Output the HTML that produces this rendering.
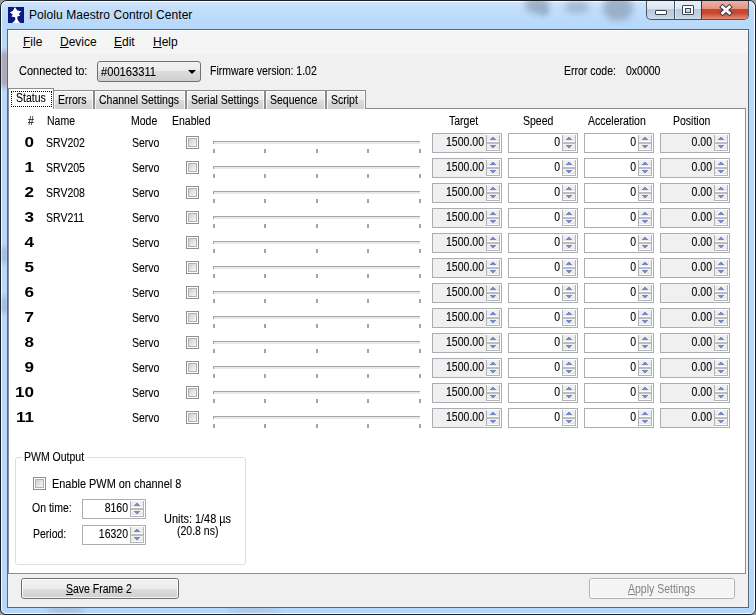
<!DOCTYPE html>
<html><head><meta charset="utf-8">
<style>
*{box-sizing:border-box;margin:0;padding:0}
html,body{width:756px;height:615px;overflow:hidden;background:#9a9a9a;font-family:"Liberation Sans",sans-serif;font-size:12px;color:#000}
#win{position:absolute;left:0;top:0;width:756px;height:615px;border:1px solid #1a2028;border-radius:7px 7px 6px 6px;
  background:linear-gradient(#d3e6fa,#c2defb 8px,#b9d9fb 22px,#b9d9fb 560px,#b6d7fb);overflow:hidden}
#win:before{content:"";position:absolute;left:0;top:0;right:0;bottom:0;border:1px solid rgba(255,255,255,.85);border-radius:6px 6px 5px 5px}
.blob{position:absolute;border-radius:50%;background:#8ea2ba;filter:blur(4px)}
#icon{position:absolute;left:7px;top:6px;width:16px;height:16px;background:#0b1a80}
#title{position:absolute;left:28px;top:7px;font-size:12px;color:#000;white-space:nowrap;letter-spacing:0.07px}
#client{position:absolute;left:7px;top:29px;width:742px;height:579px;border:1px solid #58687a;background:#f0f0f0;overflow:hidden}
#client:after{content:"";position:absolute;left:-2px;top:-2px;right:-2px;bottom:-2px;border:1px solid rgba(255,255,255,.8);pointer-events:none}
.t{position:absolute;white-space:nowrap;line-height:14px;font-size:12px;transform:scaleX(.875);transform-origin:0 0;-webkit-text-stroke:0.1px #000}
.t.r{text-align:right;transform-origin:100% 0}
.menu{position:absolute;font-size:12px;top:35px;line-height:14px;white-space:nowrap}
.u{text-decoration:underline;text-underline-offset:1px}
.combo{position:absolute;left:97px;top:61px;width:104px;height:21px;border:1px solid #707070;border-radius:3px;background:linear-gradient(#f2f2f2,#ebebeb 50%,#dddddd 50%,#cfcfcf)}
.tab{position:absolute;top:90px;height:19px;border:1px solid #898c95;border-bottom:none;background:linear-gradient(#f2f2f2,#ebebeb 50%,#dddddd 50%,#cfcfcf)}
.tab:before{content:"";position:absolute;left:0;top:0;right:0;bottom:0;border:1px solid rgba(255,255,255,.8);border-bottom:none}
#panel{position:absolute;left:8px;top:108px;width:738px;height:466px;border:1px solid #898c95;background:#fff}
.rn{position:absolute;width:34px;left:0;text-align:right;font-weight:bold;font-size:14px;line-height:16px;transform:scaleX(1.22);transform-origin:34px 0}
.cb{position:absolute;width:13px;height:13px;border:1px solid #8e8f8f;background:#fff}
.cb i{position:absolute;left:1px;top:1px;width:9px;height:9px;border:1px solid #aeb3b9;background:linear-gradient(135deg,#cbcfd5,#f7f7f7)}
.trk{position:absolute;width:207px;height:3px;border-top:1px solid #a6a6a6;border-left:1px solid #a6a6a6;background:#e7eaea}
.tick{position:absolute;width:2px;height:4px;background:#a4a4a4}
.nb{position:absolute;height:20px;border:1px solid #abadb3;background:#fff}
.nbg{position:absolute;left:0;top:0;height:18px}
.nb.ro .nbg{background:#f0f0f0}
.spin{position:absolute;width:14px;height:16px;background:#fff;border-left:1px solid #b4b4b4;border-right:1px solid #b4b4b4;border-bottom:1px solid #b4b4b4}
.spin:before{content:"";position:absolute;left:0;right:0;top:7px;height:2px;background:#bcbcbc}
.su,.sd{position:absolute;left:0;width:12px;background:linear-gradient(#f2f2f2,#e8e8e8)}
.su{top:0;height:6px} .sd{top:9px;height:5px}
.spin b{position:absolute;height:1px;background:#7589cb}
.a1{left:5px;top:2px;width:2px} .a2{left:4px;top:3px;width:4px} .a3{left:3px;top:4px;width:6px}
.d1{left:3px;top:1px;width:6px} .d2{left:4px;top:2px;width:4px} .d3{left:5px;top:3px;width:2px}
.btn{position:absolute;top:578px;height:21px;border:1px solid #707070;border-radius:3px;background:linear-gradient(#f2f2f2,#ebebeb 50%,#dddddd 50%,#cfcfcf)}
.btn:before{content:"";position:absolute;left:0;top:0;right:0;bottom:0;border:1px solid rgba(255,255,255,.8);border-radius:2px}
.btn.dis{border-color:#adb2b5;background:#f4f4f4}
.grp{position:absolute;left:15px;top:457px;width:231px;height:108px;border:1px solid #d5dfe5;border-radius:3px}
</style></head><body>
<div id="win">
  <div class="blob" style="left:524px;top:-5px;width:24px;height:18px;opacity:.75;filter:blur(3px)"></div><div class="blob" style="left:538px;top:6px;width:10px;height:9px;opacity:.6;filter:blur(2.5px)"></div>
  <div class="blob" style="left:564px;top:0px;width:24px;height:12px;opacity:.6;border-radius:40%;filter:blur(3px)"></div>
  <div class="blob" style="left:602px;top:-6px;width:30px;height:26px;opacity:.75;filter:blur(3px)"></div>
  <div class="blob" style="left:45px;top:606px;width:40px;height:6px;opacity:.45;filter:blur(2px)"></div>
  <div class="blob" style="left:225px;top:606px;width:55px;height:6px;opacity:.3;filter:blur(2px)"></div>
  <div class="blob" style="left:1px;top:50px;width:5px;height:36px;background:#a98b92;filter:blur(2.5px);border-radius:2px"></div>
  <div class="blob" style="left:1px;top:244px;width:5px;height:20px;opacity:.7;filter:blur(2px)"></div>
  <div class="blob" style="left:1px;top:294px;width:5px;height:20px;opacity:.7;filter:blur(2px)"></div>
  <div id="icon"><svg width="16" height="16" viewBox="0 0 16 16"><path d="M6.8 0 L9.4 3.4 L13.3 4.3 L10.8 6.9 L12.3 8.7 L9.3 9.6 L9.4 12 Q10 14.5 12.3 16 L4.2 16 Q6.8 14.5 7.4 12 L7.0 10.2 L3.4 9.5 L4.8 7.6 L1.9 5.6 L5.0 3.7 Z" fill="#fff"/></svg></div>
  <div id="title">Pololu Maestro Control Center</div>
  <div style="position:absolute;left:645px;top:-1px;width:103px;height:20px;border:1px solid #4a5564;border-top:none;border-radius:0 0 5px 5px;overflow:hidden;background:linear-gradient(#eaf1f9,#dde7f2 45%,#b9cadc 50%,#c3d3e4 85%,#d0deec)">
    <div style="position:absolute;left:27px;top:0;width:1px;height:20px;background:#4a5564"></div>
    <div style="position:absolute;left:28px;top:0;width:1px;height:20px;background:rgba(255,255,255,.5)"></div>
    <div style="position:absolute;left:54px;top:0;width:1px;height:20px;background:#5a2a22"></div>
    <div style="position:absolute;left:55px;top:0;width:47px;height:19px;background:linear-gradient(#efb6aa,#e39684 45%,#c9442a 50%,#c94a30 70%,#e58c74)"></div>
    <div style="position:absolute;left:8px;top:10px;width:12px;height:5px;background:#fff;border:1px solid #3c4452;border-radius:1px"></div>
    <div style="position:absolute;left:35px;top:5px;width:12px;height:10px;background:#fff;border:1px solid #3c4452;border-radius:1px"><div style="position:absolute;left:2px;top:2px;width:6px;height:5px;border:1px solid #3c4452;background:#c9dbee"></div></div>
    <svg style="position:absolute;left:72px;top:4px" width="14" height="12" viewBox="0 0 14 12"><path d="M3.6 3 L10.4 9 M10.4 3 L3.6 9" stroke="#3b3b4a" stroke-width="4.8" stroke-linecap="square"/><path d="M3.6 3 L10.4 9 M10.4 3 L3.6 9" stroke="#fff" stroke-width="2.8" stroke-linecap="square"/></svg>
  </div>
</div>
<div id="client"></div>
<div style="position:absolute;left:8px;top:30px;width:740px;height:24px;background:#f5f5f5;border-top:1px solid #fff"></div>
<div class="menu" style="left:23px"><span class="u">F</span>ile</div>
<div class="menu" style="left:60px"><span class="u">D</span>evice</div>
<div class="menu" style="left:114px"><span class="u">E</span>dit</div>
<div class="menu" style="left:153px"><span class="u">H</span>elp</div>
<div class="t" style="left:19px;top:64px;transform:scaleX(.915)">Connected to:</div>
<div class="combo"></div>
<div class="t" style="left:101px;top:65px;transform:scaleX(.93)">#00163311</div>
<div style="position:absolute;left:188px;top:70px;width:0;height:0;border-left:4px solid transparent;border-right:4px solid transparent;border-top:4px solid #000"></div>
<div class="t" style="left:210px;top:64px;">Firmware version: 1.02</div>
<div class="t" style="left:564px;top:64px;">Error code:</div>
<div class="t" style="left:626px;top:64px;">0x0000</div>
<div id="panel"></div>
<div class="tab" style="left:53px;width:41px"></div><div class="t" style="left:58px;top:93px;">Errors</div>
<div class="tab" style="left:94px;width:92px"></div><div class="t" style="left:99px;top:93px;">Channel Settings</div>
<div class="tab" style="left:186px;width:79px"></div><div class="t" style="left:191px;top:93px;">Serial Settings</div>
<div class="tab" style="left:265px;width:61px"></div><div class="t" style="left:270px;top:93px;">Sequence</div>
<div class="tab" style="left:326px;width:40px"></div><div class="t" style="left:331px;top:93px;">Script</div>
<div style="position:absolute;left:8px;top:88px;width:46px;height:21px;border:1px solid #898c95;border-bottom:none;background:#fff"></div>
<div style="position:absolute;left:11px;top:91px;width:41px;height:16px;border:1px dotted #000"></div>
<div class="t" style="left:16px;top:91px;">Status</div>
<div class="t" style="left:28px;top:114px;">#</div>
<div class="t" style="left:47px;top:114px;">Name</div>
<div class="t" style="left:131px;top:114px;">Mode</div>
<div class="t" style="left:172px;top:114px;">Enabled</div>
<div class="t" style="left:449px;top:114px;">Target</div>
<div class="t" style="left:523px;top:114px;">Speed</div>
<div class="t" style="left:588px;top:114px;">Acceleration</div>
<div class="t" style="left:673px;top:114px;">Position</div>
<div class="rn" style="top:134px">0</div>
<div class="t" style="left:46px;top:136px;">SRV202</div>
<div class="t" style="left:132px;top:136px;">Servo</div>
<div class="cb" style="left:186px;top:136px"><i></i></div>
<div class="trk" style="left:213px;top:141px"></div>
<div class="tick" style="left:213px;top:149px"></div>
<div class="tick" style="left:264px;top:149px"></div>
<div class="tick" style="left:316px;top:149px"></div>
<div class="tick" style="left:367px;top:149px"></div>
<div class="tick" style="left:419px;top:149px"></div>
<div class="nb ro" style="left:432px;top:133px;width:70px"><div class="nbg" style="width:53px"></div></div><div class="t r" style="left:284px;top:135px;width:200px">1500.00</div><div class="spin" style="left:486px;top:135px"><div class="su"><b class="a1"></b><b class="a2"></b><b class="a3"></b></div><div class="sd"><b class="d1"></b><b class="d2"></b><b class="d3"></b></div></div>
<div class="nb" style="left:508px;top:133px;width:70px"><div class="nbg" style="width:53px"></div></div><div class="t r" style="left:360px;top:135px;width:200px">0</div><div class="spin" style="left:562px;top:135px"><div class="su"><b class="a1"></b><b class="a2"></b><b class="a3"></b></div><div class="sd"><b class="d1"></b><b class="d2"></b><b class="d3"></b></div></div>
<div class="nb" style="left:584px;top:133px;width:70px"><div class="nbg" style="width:53px"></div></div><div class="t r" style="left:436px;top:135px;width:200px">0</div><div class="spin" style="left:638px;top:135px"><div class="su"><b class="a1"></b><b class="a2"></b><b class="a3"></b></div><div class="sd"><b class="d1"></b><b class="d2"></b><b class="d3"></b></div></div>
<div class="nb ro" style="left:660px;top:133px;width:70px"><div class="nbg" style="width:53px"></div></div><div class="t r" style="left:512px;top:135px;width:200px">0.00</div><div class="spin" style="left:714px;top:135px"><div class="su"><b class="a1"></b><b class="a2"></b><b class="a3"></b></div><div class="sd"><b class="d1"></b><b class="d2"></b><b class="d3"></b></div></div>
<div class="rn" style="top:159px">1</div>
<div class="t" style="left:46px;top:161px;">SRV205</div>
<div class="t" style="left:132px;top:161px;">Servo</div>
<div class="cb" style="left:186px;top:161px"><i></i></div>
<div class="trk" style="left:213px;top:166px"></div>
<div class="tick" style="left:213px;top:174px"></div>
<div class="tick" style="left:264px;top:174px"></div>
<div class="tick" style="left:316px;top:174px"></div>
<div class="tick" style="left:367px;top:174px"></div>
<div class="tick" style="left:419px;top:174px"></div>
<div class="nb ro" style="left:432px;top:158px;width:70px"><div class="nbg" style="width:53px"></div></div><div class="t r" style="left:284px;top:160px;width:200px">1500.00</div><div class="spin" style="left:486px;top:160px"><div class="su"><b class="a1"></b><b class="a2"></b><b class="a3"></b></div><div class="sd"><b class="d1"></b><b class="d2"></b><b class="d3"></b></div></div>
<div class="nb" style="left:508px;top:158px;width:70px"><div class="nbg" style="width:53px"></div></div><div class="t r" style="left:360px;top:160px;width:200px">0</div><div class="spin" style="left:562px;top:160px"><div class="su"><b class="a1"></b><b class="a2"></b><b class="a3"></b></div><div class="sd"><b class="d1"></b><b class="d2"></b><b class="d3"></b></div></div>
<div class="nb" style="left:584px;top:158px;width:70px"><div class="nbg" style="width:53px"></div></div><div class="t r" style="left:436px;top:160px;width:200px">0</div><div class="spin" style="left:638px;top:160px"><div class="su"><b class="a1"></b><b class="a2"></b><b class="a3"></b></div><div class="sd"><b class="d1"></b><b class="d2"></b><b class="d3"></b></div></div>
<div class="nb ro" style="left:660px;top:158px;width:70px"><div class="nbg" style="width:53px"></div></div><div class="t r" style="left:512px;top:160px;width:200px">0.00</div><div class="spin" style="left:714px;top:160px"><div class="su"><b class="a1"></b><b class="a2"></b><b class="a3"></b></div><div class="sd"><b class="d1"></b><b class="d2"></b><b class="d3"></b></div></div>
<div class="rn" style="top:184px">2</div>
<div class="t" style="left:46px;top:186px;">SRV208</div>
<div class="t" style="left:132px;top:186px;">Servo</div>
<div class="cb" style="left:186px;top:186px"><i></i></div>
<div class="trk" style="left:213px;top:191px"></div>
<div class="tick" style="left:213px;top:199px"></div>
<div class="tick" style="left:264px;top:199px"></div>
<div class="tick" style="left:316px;top:199px"></div>
<div class="tick" style="left:367px;top:199px"></div>
<div class="tick" style="left:419px;top:199px"></div>
<div class="nb ro" style="left:432px;top:183px;width:70px"><div class="nbg" style="width:53px"></div></div><div class="t r" style="left:284px;top:185px;width:200px">1500.00</div><div class="spin" style="left:486px;top:185px"><div class="su"><b class="a1"></b><b class="a2"></b><b class="a3"></b></div><div class="sd"><b class="d1"></b><b class="d2"></b><b class="d3"></b></div></div>
<div class="nb" style="left:508px;top:183px;width:70px"><div class="nbg" style="width:53px"></div></div><div class="t r" style="left:360px;top:185px;width:200px">0</div><div class="spin" style="left:562px;top:185px"><div class="su"><b class="a1"></b><b class="a2"></b><b class="a3"></b></div><div class="sd"><b class="d1"></b><b class="d2"></b><b class="d3"></b></div></div>
<div class="nb" style="left:584px;top:183px;width:70px"><div class="nbg" style="width:53px"></div></div><div class="t r" style="left:436px;top:185px;width:200px">0</div><div class="spin" style="left:638px;top:185px"><div class="su"><b class="a1"></b><b class="a2"></b><b class="a3"></b></div><div class="sd"><b class="d1"></b><b class="d2"></b><b class="d3"></b></div></div>
<div class="nb ro" style="left:660px;top:183px;width:70px"><div class="nbg" style="width:53px"></div></div><div class="t r" style="left:512px;top:185px;width:200px">0.00</div><div class="spin" style="left:714px;top:185px"><div class="su"><b class="a1"></b><b class="a2"></b><b class="a3"></b></div><div class="sd"><b class="d1"></b><b class="d2"></b><b class="d3"></b></div></div>
<div class="rn" style="top:209px">3</div>
<div class="t" style="left:46px;top:211px;">SRV211</div>
<div class="t" style="left:132px;top:211px;">Servo</div>
<div class="cb" style="left:186px;top:211px"><i></i></div>
<div class="trk" style="left:213px;top:216px"></div>
<div class="tick" style="left:213px;top:224px"></div>
<div class="tick" style="left:264px;top:224px"></div>
<div class="tick" style="left:316px;top:224px"></div>
<div class="tick" style="left:367px;top:224px"></div>
<div class="tick" style="left:419px;top:224px"></div>
<div class="nb ro" style="left:432px;top:208px;width:70px"><div class="nbg" style="width:53px"></div></div><div class="t r" style="left:284px;top:210px;width:200px">1500.00</div><div class="spin" style="left:486px;top:210px"><div class="su"><b class="a1"></b><b class="a2"></b><b class="a3"></b></div><div class="sd"><b class="d1"></b><b class="d2"></b><b class="d3"></b></div></div>
<div class="nb" style="left:508px;top:208px;width:70px"><div class="nbg" style="width:53px"></div></div><div class="t r" style="left:360px;top:210px;width:200px">0</div><div class="spin" style="left:562px;top:210px"><div class="su"><b class="a1"></b><b class="a2"></b><b class="a3"></b></div><div class="sd"><b class="d1"></b><b class="d2"></b><b class="d3"></b></div></div>
<div class="nb" style="left:584px;top:208px;width:70px"><div class="nbg" style="width:53px"></div></div><div class="t r" style="left:436px;top:210px;width:200px">0</div><div class="spin" style="left:638px;top:210px"><div class="su"><b class="a1"></b><b class="a2"></b><b class="a3"></b></div><div class="sd"><b class="d1"></b><b class="d2"></b><b class="d3"></b></div></div>
<div class="nb ro" style="left:660px;top:208px;width:70px"><div class="nbg" style="width:53px"></div></div><div class="t r" style="left:512px;top:210px;width:200px">0.00</div><div class="spin" style="left:714px;top:210px"><div class="su"><b class="a1"></b><b class="a2"></b><b class="a3"></b></div><div class="sd"><b class="d1"></b><b class="d2"></b><b class="d3"></b></div></div>
<div class="rn" style="top:234px">4</div>
<div class="t" style="left:132px;top:236px;">Servo</div>
<div class="cb" style="left:186px;top:236px"><i></i></div>
<div class="trk" style="left:213px;top:241px"></div>
<div class="tick" style="left:213px;top:249px"></div>
<div class="tick" style="left:264px;top:249px"></div>
<div class="tick" style="left:316px;top:249px"></div>
<div class="tick" style="left:367px;top:249px"></div>
<div class="tick" style="left:419px;top:249px"></div>
<div class="nb ro" style="left:432px;top:233px;width:70px"><div class="nbg" style="width:53px"></div></div><div class="t r" style="left:284px;top:235px;width:200px">1500.00</div><div class="spin" style="left:486px;top:235px"><div class="su"><b class="a1"></b><b class="a2"></b><b class="a3"></b></div><div class="sd"><b class="d1"></b><b class="d2"></b><b class="d3"></b></div></div>
<div class="nb" style="left:508px;top:233px;width:70px"><div class="nbg" style="width:53px"></div></div><div class="t r" style="left:360px;top:235px;width:200px">0</div><div class="spin" style="left:562px;top:235px"><div class="su"><b class="a1"></b><b class="a2"></b><b class="a3"></b></div><div class="sd"><b class="d1"></b><b class="d2"></b><b class="d3"></b></div></div>
<div class="nb" style="left:584px;top:233px;width:70px"><div class="nbg" style="width:53px"></div></div><div class="t r" style="left:436px;top:235px;width:200px">0</div><div class="spin" style="left:638px;top:235px"><div class="su"><b class="a1"></b><b class="a2"></b><b class="a3"></b></div><div class="sd"><b class="d1"></b><b class="d2"></b><b class="d3"></b></div></div>
<div class="nb ro" style="left:660px;top:233px;width:70px"><div class="nbg" style="width:53px"></div></div><div class="t r" style="left:512px;top:235px;width:200px">0.00</div><div class="spin" style="left:714px;top:235px"><div class="su"><b class="a1"></b><b class="a2"></b><b class="a3"></b></div><div class="sd"><b class="d1"></b><b class="d2"></b><b class="d3"></b></div></div>
<div class="rn" style="top:259px">5</div>
<div class="t" style="left:132px;top:261px;">Servo</div>
<div class="cb" style="left:186px;top:261px"><i></i></div>
<div class="trk" style="left:213px;top:266px"></div>
<div class="tick" style="left:213px;top:274px"></div>
<div class="tick" style="left:264px;top:274px"></div>
<div class="tick" style="left:316px;top:274px"></div>
<div class="tick" style="left:367px;top:274px"></div>
<div class="tick" style="left:419px;top:274px"></div>
<div class="nb ro" style="left:432px;top:258px;width:70px"><div class="nbg" style="width:53px"></div></div><div class="t r" style="left:284px;top:260px;width:200px">1500.00</div><div class="spin" style="left:486px;top:260px"><div class="su"><b class="a1"></b><b class="a2"></b><b class="a3"></b></div><div class="sd"><b class="d1"></b><b class="d2"></b><b class="d3"></b></div></div>
<div class="nb" style="left:508px;top:258px;width:70px"><div class="nbg" style="width:53px"></div></div><div class="t r" style="left:360px;top:260px;width:200px">0</div><div class="spin" style="left:562px;top:260px"><div class="su"><b class="a1"></b><b class="a2"></b><b class="a3"></b></div><div class="sd"><b class="d1"></b><b class="d2"></b><b class="d3"></b></div></div>
<div class="nb" style="left:584px;top:258px;width:70px"><div class="nbg" style="width:53px"></div></div><div class="t r" style="left:436px;top:260px;width:200px">0</div><div class="spin" style="left:638px;top:260px"><div class="su"><b class="a1"></b><b class="a2"></b><b class="a3"></b></div><div class="sd"><b class="d1"></b><b class="d2"></b><b class="d3"></b></div></div>
<div class="nb ro" style="left:660px;top:258px;width:70px"><div class="nbg" style="width:53px"></div></div><div class="t r" style="left:512px;top:260px;width:200px">0.00</div><div class="spin" style="left:714px;top:260px"><div class="su"><b class="a1"></b><b class="a2"></b><b class="a3"></b></div><div class="sd"><b class="d1"></b><b class="d2"></b><b class="d3"></b></div></div>
<div class="rn" style="top:284px">6</div>
<div class="t" style="left:132px;top:286px;">Servo</div>
<div class="cb" style="left:186px;top:286px"><i></i></div>
<div class="trk" style="left:213px;top:291px"></div>
<div class="tick" style="left:213px;top:299px"></div>
<div class="tick" style="left:264px;top:299px"></div>
<div class="tick" style="left:316px;top:299px"></div>
<div class="tick" style="left:367px;top:299px"></div>
<div class="tick" style="left:419px;top:299px"></div>
<div class="nb ro" style="left:432px;top:283px;width:70px"><div class="nbg" style="width:53px"></div></div><div class="t r" style="left:284px;top:285px;width:200px">1500.00</div><div class="spin" style="left:486px;top:285px"><div class="su"><b class="a1"></b><b class="a2"></b><b class="a3"></b></div><div class="sd"><b class="d1"></b><b class="d2"></b><b class="d3"></b></div></div>
<div class="nb" style="left:508px;top:283px;width:70px"><div class="nbg" style="width:53px"></div></div><div class="t r" style="left:360px;top:285px;width:200px">0</div><div class="spin" style="left:562px;top:285px"><div class="su"><b class="a1"></b><b class="a2"></b><b class="a3"></b></div><div class="sd"><b class="d1"></b><b class="d2"></b><b class="d3"></b></div></div>
<div class="nb" style="left:584px;top:283px;width:70px"><div class="nbg" style="width:53px"></div></div><div class="t r" style="left:436px;top:285px;width:200px">0</div><div class="spin" style="left:638px;top:285px"><div class="su"><b class="a1"></b><b class="a2"></b><b class="a3"></b></div><div class="sd"><b class="d1"></b><b class="d2"></b><b class="d3"></b></div></div>
<div class="nb ro" style="left:660px;top:283px;width:70px"><div class="nbg" style="width:53px"></div></div><div class="t r" style="left:512px;top:285px;width:200px">0.00</div><div class="spin" style="left:714px;top:285px"><div class="su"><b class="a1"></b><b class="a2"></b><b class="a3"></b></div><div class="sd"><b class="d1"></b><b class="d2"></b><b class="d3"></b></div></div>
<div class="rn" style="top:309px">7</div>
<div class="t" style="left:132px;top:311px;">Servo</div>
<div class="cb" style="left:186px;top:311px"><i></i></div>
<div class="trk" style="left:213px;top:316px"></div>
<div class="tick" style="left:213px;top:324px"></div>
<div class="tick" style="left:264px;top:324px"></div>
<div class="tick" style="left:316px;top:324px"></div>
<div class="tick" style="left:367px;top:324px"></div>
<div class="tick" style="left:419px;top:324px"></div>
<div class="nb ro" style="left:432px;top:308px;width:70px"><div class="nbg" style="width:53px"></div></div><div class="t r" style="left:284px;top:310px;width:200px">1500.00</div><div class="spin" style="left:486px;top:310px"><div class="su"><b class="a1"></b><b class="a2"></b><b class="a3"></b></div><div class="sd"><b class="d1"></b><b class="d2"></b><b class="d3"></b></div></div>
<div class="nb" style="left:508px;top:308px;width:70px"><div class="nbg" style="width:53px"></div></div><div class="t r" style="left:360px;top:310px;width:200px">0</div><div class="spin" style="left:562px;top:310px"><div class="su"><b class="a1"></b><b class="a2"></b><b class="a3"></b></div><div class="sd"><b class="d1"></b><b class="d2"></b><b class="d3"></b></div></div>
<div class="nb" style="left:584px;top:308px;width:70px"><div class="nbg" style="width:53px"></div></div><div class="t r" style="left:436px;top:310px;width:200px">0</div><div class="spin" style="left:638px;top:310px"><div class="su"><b class="a1"></b><b class="a2"></b><b class="a3"></b></div><div class="sd"><b class="d1"></b><b class="d2"></b><b class="d3"></b></div></div>
<div class="nb ro" style="left:660px;top:308px;width:70px"><div class="nbg" style="width:53px"></div></div><div class="t r" style="left:512px;top:310px;width:200px">0.00</div><div class="spin" style="left:714px;top:310px"><div class="su"><b class="a1"></b><b class="a2"></b><b class="a3"></b></div><div class="sd"><b class="d1"></b><b class="d2"></b><b class="d3"></b></div></div>
<div class="rn" style="top:334px">8</div>
<div class="t" style="left:132px;top:336px;">Servo</div>
<div class="cb" style="left:186px;top:336px"><i></i></div>
<div class="trk" style="left:213px;top:341px"></div>
<div class="tick" style="left:213px;top:349px"></div>
<div class="tick" style="left:264px;top:349px"></div>
<div class="tick" style="left:316px;top:349px"></div>
<div class="tick" style="left:367px;top:349px"></div>
<div class="tick" style="left:419px;top:349px"></div>
<div class="nb ro" style="left:432px;top:333px;width:70px"><div class="nbg" style="width:53px"></div></div><div class="t r" style="left:284px;top:335px;width:200px">1500.00</div><div class="spin" style="left:486px;top:335px"><div class="su"><b class="a1"></b><b class="a2"></b><b class="a3"></b></div><div class="sd"><b class="d1"></b><b class="d2"></b><b class="d3"></b></div></div>
<div class="nb" style="left:508px;top:333px;width:70px"><div class="nbg" style="width:53px"></div></div><div class="t r" style="left:360px;top:335px;width:200px">0</div><div class="spin" style="left:562px;top:335px"><div class="su"><b class="a1"></b><b class="a2"></b><b class="a3"></b></div><div class="sd"><b class="d1"></b><b class="d2"></b><b class="d3"></b></div></div>
<div class="nb" style="left:584px;top:333px;width:70px"><div class="nbg" style="width:53px"></div></div><div class="t r" style="left:436px;top:335px;width:200px">0</div><div class="spin" style="left:638px;top:335px"><div class="su"><b class="a1"></b><b class="a2"></b><b class="a3"></b></div><div class="sd"><b class="d1"></b><b class="d2"></b><b class="d3"></b></div></div>
<div class="nb ro" style="left:660px;top:333px;width:70px"><div class="nbg" style="width:53px"></div></div><div class="t r" style="left:512px;top:335px;width:200px">0.00</div><div class="spin" style="left:714px;top:335px"><div class="su"><b class="a1"></b><b class="a2"></b><b class="a3"></b></div><div class="sd"><b class="d1"></b><b class="d2"></b><b class="d3"></b></div></div>
<div class="rn" style="top:359px">9</div>
<div class="t" style="left:132px;top:361px;">Servo</div>
<div class="cb" style="left:186px;top:361px"><i></i></div>
<div class="trk" style="left:213px;top:366px"></div>
<div class="tick" style="left:213px;top:374px"></div>
<div class="tick" style="left:264px;top:374px"></div>
<div class="tick" style="left:316px;top:374px"></div>
<div class="tick" style="left:367px;top:374px"></div>
<div class="tick" style="left:419px;top:374px"></div>
<div class="nb ro" style="left:432px;top:358px;width:70px"><div class="nbg" style="width:53px"></div></div><div class="t r" style="left:284px;top:360px;width:200px">1500.00</div><div class="spin" style="left:486px;top:360px"><div class="su"><b class="a1"></b><b class="a2"></b><b class="a3"></b></div><div class="sd"><b class="d1"></b><b class="d2"></b><b class="d3"></b></div></div>
<div class="nb" style="left:508px;top:358px;width:70px"><div class="nbg" style="width:53px"></div></div><div class="t r" style="left:360px;top:360px;width:200px">0</div><div class="spin" style="left:562px;top:360px"><div class="su"><b class="a1"></b><b class="a2"></b><b class="a3"></b></div><div class="sd"><b class="d1"></b><b class="d2"></b><b class="d3"></b></div></div>
<div class="nb" style="left:584px;top:358px;width:70px"><div class="nbg" style="width:53px"></div></div><div class="t r" style="left:436px;top:360px;width:200px">0</div><div class="spin" style="left:638px;top:360px"><div class="su"><b class="a1"></b><b class="a2"></b><b class="a3"></b></div><div class="sd"><b class="d1"></b><b class="d2"></b><b class="d3"></b></div></div>
<div class="nb ro" style="left:660px;top:358px;width:70px"><div class="nbg" style="width:53px"></div></div><div class="t r" style="left:512px;top:360px;width:200px">0.00</div><div class="spin" style="left:714px;top:360px"><div class="su"><b class="a1"></b><b class="a2"></b><b class="a3"></b></div><div class="sd"><b class="d1"></b><b class="d2"></b><b class="d3"></b></div></div>
<div class="rn" style="top:384px">10</div>
<div class="t" style="left:132px;top:386px;">Servo</div>
<div class="cb" style="left:186px;top:386px"><i></i></div>
<div class="trk" style="left:213px;top:391px"></div>
<div class="tick" style="left:213px;top:399px"></div>
<div class="tick" style="left:264px;top:399px"></div>
<div class="tick" style="left:316px;top:399px"></div>
<div class="tick" style="left:367px;top:399px"></div>
<div class="tick" style="left:419px;top:399px"></div>
<div class="nb ro" style="left:432px;top:383px;width:70px"><div class="nbg" style="width:53px"></div></div><div class="t r" style="left:284px;top:385px;width:200px">1500.00</div><div class="spin" style="left:486px;top:385px"><div class="su"><b class="a1"></b><b class="a2"></b><b class="a3"></b></div><div class="sd"><b class="d1"></b><b class="d2"></b><b class="d3"></b></div></div>
<div class="nb" style="left:508px;top:383px;width:70px"><div class="nbg" style="width:53px"></div></div><div class="t r" style="left:360px;top:385px;width:200px">0</div><div class="spin" style="left:562px;top:385px"><div class="su"><b class="a1"></b><b class="a2"></b><b class="a3"></b></div><div class="sd"><b class="d1"></b><b class="d2"></b><b class="d3"></b></div></div>
<div class="nb" style="left:584px;top:383px;width:70px"><div class="nbg" style="width:53px"></div></div><div class="t r" style="left:436px;top:385px;width:200px">0</div><div class="spin" style="left:638px;top:385px"><div class="su"><b class="a1"></b><b class="a2"></b><b class="a3"></b></div><div class="sd"><b class="d1"></b><b class="d2"></b><b class="d3"></b></div></div>
<div class="nb ro" style="left:660px;top:383px;width:70px"><div class="nbg" style="width:53px"></div></div><div class="t r" style="left:512px;top:385px;width:200px">0.00</div><div class="spin" style="left:714px;top:385px"><div class="su"><b class="a1"></b><b class="a2"></b><b class="a3"></b></div><div class="sd"><b class="d1"></b><b class="d2"></b><b class="d3"></b></div></div>
<div class="rn" style="top:409px">11</div>
<div class="t" style="left:132px;top:411px;">Servo</div>
<div class="cb" style="left:186px;top:411px"><i></i></div>
<div class="trk" style="left:213px;top:416px"></div>
<div class="tick" style="left:213px;top:424px"></div>
<div class="tick" style="left:264px;top:424px"></div>
<div class="tick" style="left:316px;top:424px"></div>
<div class="tick" style="left:367px;top:424px"></div>
<div class="tick" style="left:419px;top:424px"></div>
<div class="nb ro" style="left:432px;top:408px;width:70px"><div class="nbg" style="width:53px"></div></div><div class="t r" style="left:284px;top:410px;width:200px">1500.00</div><div class="spin" style="left:486px;top:410px"><div class="su"><b class="a1"></b><b class="a2"></b><b class="a3"></b></div><div class="sd"><b class="d1"></b><b class="d2"></b><b class="d3"></b></div></div>
<div class="nb" style="left:508px;top:408px;width:70px"><div class="nbg" style="width:53px"></div></div><div class="t r" style="left:360px;top:410px;width:200px">0</div><div class="spin" style="left:562px;top:410px"><div class="su"><b class="a1"></b><b class="a2"></b><b class="a3"></b></div><div class="sd"><b class="d1"></b><b class="d2"></b><b class="d3"></b></div></div>
<div class="nb" style="left:584px;top:408px;width:70px"><div class="nbg" style="width:53px"></div></div><div class="t r" style="left:436px;top:410px;width:200px">0</div><div class="spin" style="left:638px;top:410px"><div class="su"><b class="a1"></b><b class="a2"></b><b class="a3"></b></div><div class="sd"><b class="d1"></b><b class="d2"></b><b class="d3"></b></div></div>
<div class="nb ro" style="left:660px;top:408px;width:70px"><div class="nbg" style="width:53px"></div></div><div class="t r" style="left:512px;top:410px;width:200px">0.00</div><div class="spin" style="left:714px;top:410px"><div class="su"><b class="a1"></b><b class="a2"></b><b class="a3"></b></div><div class="sd"><b class="d1"></b><b class="d2"></b><b class="d3"></b></div></div>
<div class="grp"></div>
<div style="position:absolute;left:22px;top:452px;width:65px;height:10px;background:#fff"></div>
<div class="t" style="left:24px;top:450px;">PWM Output</div>
<div class="cb" style="left:33px;top:477px"><i></i></div>
<div class="t" style="left:52px;top:477px;transform:scaleX(.91)">Enable PWM on channel 8</div>
<div class="t" style="left:32px;top:501px;">On time:</div>
<div class="t" style="left:33px;top:527px;">Period:</div>
<div class="nb" style="left:82px;top:499px;width:64px"><div class="nbg" style="width:47px"></div></div><div class="t r" style="left:-72px;top:501px;width:200px">8160</div><div class="spin" style="left:130px;top:501px"><div class="su"><b class="a1"></b><b class="a2"></b><b class="a3"></b></div><div class="sd"><b class="d1"></b><b class="d2"></b><b class="d3"></b></div></div>
<div class="nb" style="left:82px;top:525px;width:64px"><div class="nbg" style="width:47px"></div></div><div class="t r" style="left:-72px;top:527px;width:200px">16320</div><div class="spin" style="left:130px;top:527px"><div class="su"><b class="a1"></b><b class="a2"></b><b class="a3"></b></div><div class="sd"><b class="d1"></b><b class="d2"></b><b class="d3"></b></div></div>
<div class="t" style="left:164px;top:512px;transform:scaleX(.91)">Units: 1/48 µs</div>
<div class="t" style="left:177px;top:524px;">(20.8 ns)</div>
<div class="btn" style="left:21px;width:158px"></div>
<div class="t" style="left:66px;top:582px;"><span class="u">S</span>ave Frame 2</div>
<div class="btn dis" style="left:589px;width:146px"></div>
<div class="t" style="left:628px;top:582px;color:#838383;-webkit-text-stroke:0"><span class="u">A</span>pply Settings</div>
</body></html>
